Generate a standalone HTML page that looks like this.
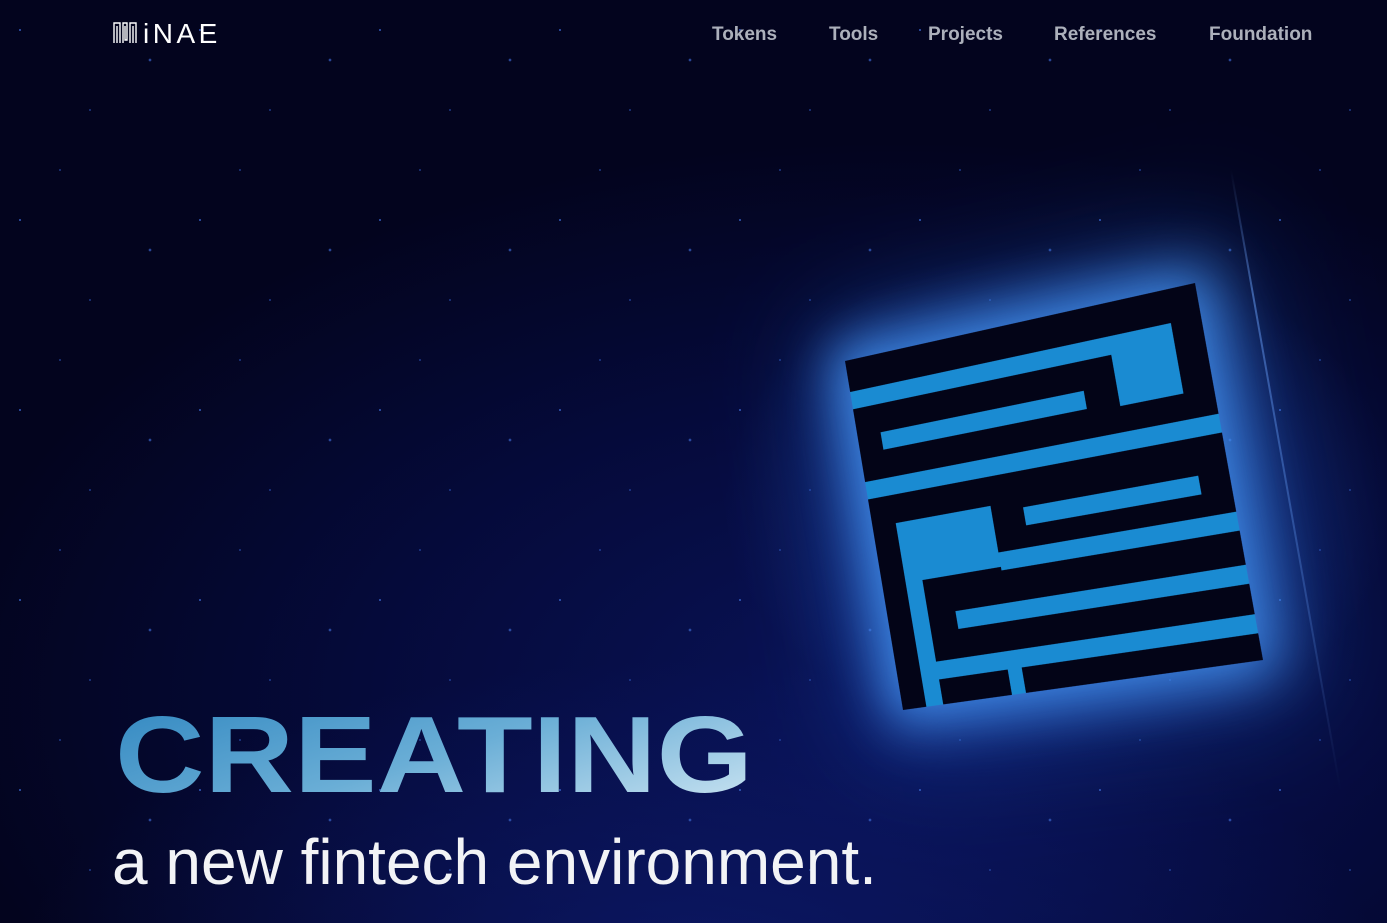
<!DOCTYPE html>
<html><head><meta charset="utf-8"><style>
*{margin:0;padding:0;box-sizing:border-box}
html,body{width:1387px;height:923px;overflow:hidden}
body{position:relative;font-family:"Liberation Sans",sans-serif;
background:
radial-gradient(ellipse 480px 360px at 1060px 500px,rgba(40,90,200,.4),rgba(20,40,140,0) 70%),
radial-gradient(ellipse 900px 400px at 700px 960px,rgba(15,30,120,.6),rgba(10,20,90,0) 75%),
radial-gradient(ellipse 1200px 700px at 900px 700px,#091358 0%,#050a3a 45%,#03041e 80%),
#03031a;}
.nav{position:absolute;top:24px;font-size:19px;font-weight:bold;color:#acb0bb}
.logo{position:absolute;left:143px;top:18px;font-size:28px;color:#fff;letter-spacing:3.5px}
.maze{position:absolute;left:0;top:0;width:100px;height:100px;transform-origin:0 0;
transform:matrix3d(2.5912,-0.9952,0,-0.0007605,0.4589,3.3948,0,-0.00013414,0,0,1,0,845,361,0,1);
background:#030417;box-shadow:0 0 14px 4px rgba(70,150,245,.85),0 0 30px 8px rgba(40,110,230,.45)}
.maze i{position:absolute;background:#1a8bd2}
.h1{position:absolute;left:115px;top:693px;font-size:109px;font-weight:bold;transform:scaleX(1.137);transform-origin:0 0;
background:linear-gradient(160deg,#2f86c0 0%,#6aaed6 50%,#d2e8f4 100%);-webkit-background-clip:text;background-clip:text;color:transparent;line-height:1.15}
.h2{position:absolute;left:112px;top:827px;font-size:64px;color:#f2f3f6;line-height:1.1}
.streak{position:absolute;left:1230px;top:170px;width:2px;height:630px;transform:rotate(-10deg);transform-origin:0 0;
background:linear-gradient(#0000,rgba(120,170,255,.5) 20%,rgba(120,170,255,.25) 70%,#0000)}
.stars{position:absolute;inset:0;background-image:
radial-gradient(1.2px 1.2px at 20px 30px,#3a63c8 99%,#0000),
radial-gradient(1px 1px at 90px 110px,#2c50b0 99%,#0000),
radial-gradient(1.3px 1.3px at 150px 60px,#3a63c8 99%,#0000),
radial-gradient(1px 1px at 60px 170px,#2c50b0 99%,#0000);background-size:180px 190px;opacity:.7}
</style></head><body>
<div class="stars"></div>
<div class="streak"></div>
<svg style="position:absolute;left:113px;top:22px" width="24" height="22" viewBox="0 0 24 22" fill="none" stroke="#fff" stroke-width="1.4">
<path d="M1 21V1h6v20M4 21V4M10 21V1h4v17h-2V4M17 21V1h6v20M20 21V4"/></svg>
<div class="logo">iNAE</div>
<div class="nav" style="left:712px">Tokens</div>
<div class="nav" style="left:829px">Tools</div>
<div class="nav" style="left:928px">Projects</div>
<div class="nav" style="left:1054px">References</div>
<div class="nav" style="left:1209px">Foundation</div>
<div class="maze">
<i style="left:0;top:8.5px;width:92px;height:5px"></i>
<i style="left:74.5px;top:8.5px;width:17.5px;height:19px"></i>
<i style="left:7.2px;top:21.5px;width:59px;height:5px"></i>
<i style="left:0;top:34.5px;width:100px;height:5px"></i>
<i style="left:44px;top:49.5px;width:48px;height:5px"></i>
<i style="left:7.3px;top:48px;width:28.2px;height:17px"></i>
<i style="left:35px;top:61px;width:65px;height:4.8px"></i>
<i style="left:7.3px;top:48px;width:5px;height:52px"></i>
<i style="left:20px;top:74.5px;width:80px;height:5px"></i>
<i style="left:7.3px;top:87.5px;width:92.7px;height:5px"></i>
<i style="left:32px;top:87.5px;width:4px;height:12.5px"></i>
</div>
<div class="h1">CREATING</div>
<div class="h2">a new fintech environment.</div>
</body></html>
